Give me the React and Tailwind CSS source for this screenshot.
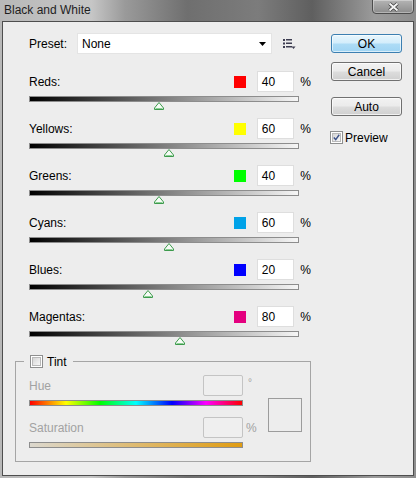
const channels = [
  { name: "Reds", swatch: "bg-[#ff0000]", value: 40 },
  { name: "Yellows", swatch: "bg-[#ffff00]", value: 60 },
  { name: "Greens", swatch: "bg-[#00ff00]", value: 40 },
  { name: "Cyans", swatch: "bg-[#00a2e8]", value: 60 },
  { name: "Blues", swatch: "bg-[#0000ff]", value: 20 },
  { name: "Magentas", swatch: "bg-[#e4007f]", value: 80 },
];

// slider runs from -200% to 300%
const toPos = (v) => ((v + 200) / 500) * 100;

function Thumb() {
  return (
    <svg width="10" height="8" viewBox="0 0 10 8">
      <path d="M5 0.5 L9.5 6 L9.5 7.5 L0.5 7.5 L0.5 6 Z" fill="#f6fcf6" stroke="#3c9a4c" />
      <path d="M1.5 6.5 H8.5" stroke="#8ccf95" />
    </svg>
  );
}

function Checkbox({ checked }) {
  return (
    <div className="w-[13px] h-[13px] border border-[#8e8f8f] bg-white p-[1px] shrink-0">
      <div className="w-full h-full border border-[#b9b9b9] bg-[linear-gradient(135deg,#d6d6d6,#f7f7f7)] flex items-center justify-center">
        {checked && (
          <svg width="9" height="9" viewBox="0 0 9 9">
            <path d="M1 4.5 L3.5 7.2 L8 1" fill="none" stroke="#3d5289" strokeWidth="1.8" />
          </svg>
        )}
      </div>
    </div>
  );
}

function Button({ label, primary }) {
  return (
    <div
      className={
        "w-[71px] h-[19px] rounded-[3px] border flex items-center justify-center text-[12px] text-black " +
        (primary
          ? "border-[#3c7fb1] bg-[linear-gradient(#e8f6fd_0%,#d3edfb_48%,#aedcf6_52%,#9fd4f3_100%)] shadow-[inset_0_0_0_1px_rgba(255,255,255,0.6)]"
          : "border-[#707070] bg-[linear-gradient(#f2f2f2_0%,#ebebeb_48%,#dddddd_52%,#cfcfcf_100%)] shadow-[inset_0_0_0_1px_rgba(255,255,255,0.7)]")
      }
    >
      {label}
    </div>
  );
}

function ChannelRow({ name, swatch, value }) {
  return (
    <div className="h-[47px] pl-[14px]">
      <div className="flex items-center h-[21px]">
        <span className="w-[208px] text-[12px] text-black">{name}:</span>
        <div className={"w-[12px] h-[12px] " + swatch} />
        <div className="ml-[11px] w-[38px] h-[21px] bg-white border border-[#dedede] flex items-center pl-[4px] text-[12px] text-black">
          {value}
        </div>
        <span className="ml-[6px] text-[12px] text-black">%</span>
      </div>
      <div className="mt-[4px] w-[270px] h-[6px] border border-[#8d8d8d] bg-[linear-gradient(90deg,#000000,#7d7d7d_50%,#f6f6f6)]" />
      <div className="relative w-[270px] h-[8px]">
        <div className="absolute top-0 -translate-x-1/2 flex" style={{ left: `${toPos(value)}%` }}>
          <Thumb />
        </div>
      </div>
    </div>
  );
}

export default function App() {
  return (
    <div className="w-[416px] h-[478px] flex flex-col overflow-hidden font-['Liberation_Sans',Arial,sans-serif] bg-[linear-gradient(90deg,#b8b8b8_0%,#c6c6c6_22%,#9a9a9a_30%,#6f6f6f_45%,#7c7c7c_62%,#5f5f5f_75%,#9b9b9b_90%,#8e8e8e_100%)]">
      {/* title bar */}
      <div className="h-[21px] flex items-start justify-between pl-[4px]">
        <span className="mt-[3px] text-[12px] leading-[14px] text-[#1e1e1e]">Black and White</span>
        <div className="w-[42px] h-[15px] -mt-[1px] mr-[2px] rounded-b-[4px] border border-[#4c4c4c] bg-[linear-gradient(#b4b4b4,#8c8c8c)] shadow-[inset_0_0_0_1px_rgba(255,255,255,0.35)] flex items-center justify-center">
          <svg width="13" height="10" viewBox="0 0 13 10">
            <path d="M2.5 1.5 L10.5 8.5 M10.5 1.5 L2.5 8.5" stroke="#3c3c3c" strokeWidth="3.6" />
            <path d="M2.5 1.5 L10.5 8.5 M10.5 1.5 L2.5 8.5" stroke="#f4f4f4" strokeWidth="2" />
          </svg>
        </div>
      </div>

      {/* client area */}
      <div className="flex-1 mx-[2px] mb-[2px] border border-[#4e4e4e] bg-[#ededed] flex">
        <div className="pl-[12px] pt-[11px] w-[308px] flex flex-col">
          <div className="flex items-center h-[21px] pl-[14px]">
            <span className="w-[48px] text-[12px] text-black">Preset:</span>
            <div className="w-[195px] h-[21px] bg-white border border-[#e4e4e4] flex items-center justify-between pl-[4px] pr-[5px] text-[12px] text-black">
              <span>None</span>
              <svg width="7" height="4" viewBox="0 0 7 4">
                <path d="M0 0 H7 L3.5 4 Z" fill="#000" />
              </svg>
            </div>
            <svg className="ml-[11px]" width="13" height="10" viewBox="0 0 13 10">
              <g fill="#3e3e52">
                <rect x="0" y="0" width="2" height="2" />
                <rect x="3" y="0" width="6" height="1.5" />
                <rect x="0" y="3.5" width="2" height="2" />
                <rect x="3" y="3.5" width="6" height="1.5" />
                <rect x="0" y="7" width="2" height="2" />
                <rect x="3" y="7" width="6" height="1.5" />
                <path d="M8.5 7.5 H12.5 L10.5 10 Z" />
              </g>
            </svg>
          </div>

          <div className="mt-[17px]">
            {channels.map((c) => (
              <ChannelRow key={c.name} {...c} />
            ))}
          </div>

          {/* tint group */}
          <fieldset className="mt-[1px] w-[296px] border border-[#a5a5a5] p-0 m-0">
            <legend className="ml-[8px] px-[6px] h-[15px] flex items-center">
              <Checkbox />
              <span className="ml-[4px] text-[12px] text-black">Tint</span>
            </legend>
            <div className="flex items-center pl-[13px] pt-[6px] pb-[13px]">
              <div className="w-[233px]">
                <div className="flex items-center h-[21px]">
                  <span className="w-[174px] text-[12px] text-[#a2a2a2]">Hue</span>
                  <div className="w-[40px] h-[21px] rounded-[2px] border border-[#c4c4c4] bg-[#efefef]" />
                  <span className="ml-[5px] -mt-[6px] text-[10px] text-[#a2a2a2]">°</span>
                </div>
                <div className="mt-[4px] w-[214px] h-[6px] border border-[#8d8d8d] bg-[linear-gradient(90deg,#ff0000,#ffff00_17%,#00ff00_33%,#00ffff_50%,#0000ff_67%,#ff00ff_83%,#ff0000)]" />
                <div className="mt-[11px] flex items-center h-[21px]">
                  <span className="w-[174px] text-[12px] text-[#a2a2a2]">Saturation</span>
                  <div className="w-[40px] h-[21px] rounded-[2px] border border-[#c4c4c4] bg-[#efefef]" />
                  <span className="ml-[3px] text-[12px] text-[#a2a2a2]">%</span>
                </div>
                <div className="mt-[4px] w-[214px] h-[6px] border border-[#8d8d8d] bg-[linear-gradient(90deg,#dcd8ce,#e09c12)]" />
              </div>
              <div className="ml-[6px] mt-[7px] w-[34px] h-[34px] border border-[#9c9c9c]" />
            </div>
          </fieldset>
        </div>

        {/* buttons */}
        <div className="ml-[20px] pt-[12px] flex flex-col">
          <Button label="OK" primary />
          <div className="mt-[9px]">
            <Button label="Cancel" />
          </div>
          <div className="mt-[16px]">
            <Button label="Auto" />
          </div>
          <div className="mt-[15px] -ml-[1px] flex items-center h-[13px]">
            <Checkbox checked />
            <span className="ml-[2px] text-[12px] text-black">Preview</span>
          </div>
        </div>
      </div>
    </div>
  );
}
